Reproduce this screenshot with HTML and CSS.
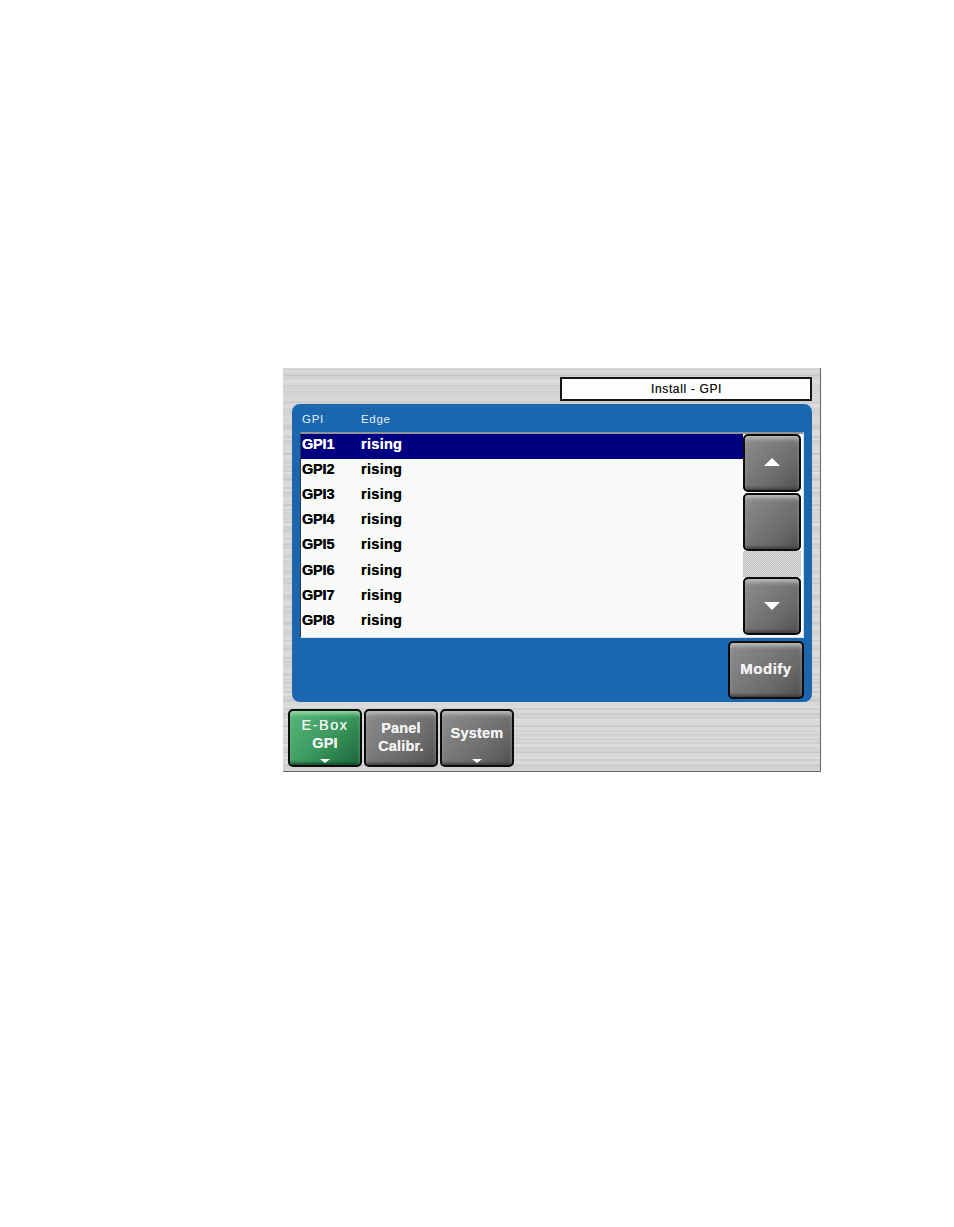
FILE: index.html
```html
<!DOCTYPE html>
<html lang="en">
<head>
<meta charset="utf-8">
<title>Install - GPI</title>
<link rel="stylesheet" href="styles.css">
</head>
<body>
<main class="screen">
  <header class="topbar"><div class="title">Install - GPI</div></header>
  <section class="panel">
    <div class="cols"><span class="col-a">GPI</span><span>Edge</span></div>
    <div class="listbox">
      <ul class="rows">
        <li class="row selected"><span class="col-a">GPI1</span><span class="val">rising</span></li>
        <li class="row"><span class="col-a">GPI2</span><span class="val">rising</span></li>
        <li class="row"><span class="col-a">GPI3</span><span class="val">rising</span></li>
        <li class="row"><span class="col-a">GPI4</span><span class="val">rising</span></li>
        <li class="row"><span class="col-a">GPI5</span><span class="val">rising</span></li>
        <li class="row"><span class="col-a">GPI6</span><span class="val">rising</span></li>
        <li class="row"><span class="col-a">GPI7</span><span class="val">rising</span></li>
        <li class="row"><span class="col-a">GPI8</span><span class="val">rising</span></li>
      </ul>
      <div class="scroll">
        <button class="btn sbtn up"><svg class="arrow" viewBox="0 0 16 8" width="16" height="8"><path d="M8 0 16 8H0Z"/></svg></button>
        <button class="btn sbtn thumb"></button>
        <div class="track"></div>
        <button class="btn sbtn"><svg class="arrow" viewBox="0 0 16 8" width="16" height="8"><path d="M0 0H16L8 8Z"/></svg></button>
      </div>
    </div>
    <div class="actions"><button class="btn modify">Modify</button></div>
  </section>
  <nav class="tabs">
    <button class="btn tab green"><span class="e">E-Box</span><span>GPI</span><svg class="caret" viewBox="0 0 10 4" width="10" height="4"><path d="M0 0H10L5 4Z"/></svg></button>
    <button class="btn tab"><span>Panel</span><span>Calibr.</span></button>
    <button class="btn tab lift"><span>System</span><svg class="caret" viewBox="0 0 10 4" width="10" height="4"><path d="M0 0H10L5 4Z"/></svg></button>
  </nav>
</main>
</body>
</html>
```
FILE: styles.css
```css
* { box-sizing: border-box; }
html, body { margin: 0; background: #fff; }
body { height: 1227px; padding: 368px 0 0 283px; font-family: "Liberation Sans", Arial, sans-serif; }
.screen {
  width: 538px; height: 404px;
  padding: 9px 0 0 9px;
  border-right: 1px solid #666; border-bottom: 1px solid #666;
  background-color: #d6d6d6;
  background-image:
    repeating-linear-gradient(180deg, rgba(255,255,255,.22) 0 1px, rgba(0,0,0,0) 1px 7px, rgba(0,0,0,.05) 7px 8px, rgba(0,0,0,0) 8px 13px),
    repeating-linear-gradient(180deg, rgba(0,0,0,.035) 0 2px, rgba(255,255,255,.1) 2px 5px, rgba(0,0,0,.02) 5px 11px, rgba(255,255,255,.06) 11px 17px);
}
.topbar { display: flex; justify-content: flex-end; height: 24px; padding-right: 8px; }
.title {
  width: 252px; height: 24px; background: #fdfdfd; border: 2px solid #151515;
  display: flex; align-items: center; justify-content: center;
  font-size: 12px; letter-spacing: .65px; color: #111; padding-left: 1px;
  text-shadow: 0 0 .6px rgba(0,0,0,.6);
}
.panel {
  margin-top: 3px; width: 520px; height: 298px; background: #1a67b0; border-radius: 8px;
  padding: 0 8px; display: flex; flex-direction: column;
}
.cols { height: 28px; display: flex; align-items: center; padding: 2px 0 0 2px; color: #e4eef8; font-size: 11.5px; letter-spacing: .7px; }
.col-a { width: 59px; display: block; }
.listbox {
  height: 206px; display: flex; background: #f9fbfa;
  border: 1px solid #d8dde2; border-top: 2px solid #8f959b; border-left: 1px solid #30363c;
  padding-right: 2px;
}
.rows { flex: 1; margin: 0; padding: 0; list-style: none; }
.row {
  height: 25.2px; display: flex; align-items: center; padding-bottom: 6px; padding-left: 1px;
  color: #060606; font-weight: bold; font-size: 14.5px; text-shadow: 0 0 .6px currentColor;
}
.row .col-a { letter-spacing: -.2px; }
.val { letter-spacing: .3px; }
.selected { background: #000080; color: #fff; }
.scroll { width: 58px; display: flex; flex-direction: column; align-items: stretch; }
.btn {
  display: flex; flex-direction: column; align-items: center; justify-content: center;
  margin: 0; padding: 0; color: #f2f2f2; font-family: inherit; font-weight: bold;
  border: 2px solid #0c0c0c; border-radius: 5px;
  background: linear-gradient(135deg, #8d8d8d 0%, #7c7c7c 35%, #696969 70%, #4f4f4f 100%);
  box-shadow: inset 0 4px 4px -1px #bcbcbc, inset 0 -3px 3px -1px #3f3f3f;
  text-shadow: 0 0 .6px currentColor;
}
.sbtn { height: 58px; width: 58px; }
.up { padding-bottom: 3px; }
.thumb { margin-top: 1px; }
.track {
  height: 26px;
  background-color: #c9c9c9;
  background-image: repeating-conic-gradient(#b8b8b8 0 25%, #e6e6e6 0 50%);
  background-size: 2px 2px;
}
.arrow path, .caret path { fill: #fff; }
.actions { display: flex; justify-content: flex-end; padding-top: 3px; }
.modify { width: 76px; height: 58px; font-size: 15px; letter-spacing: .5px; padding-bottom: 3px; }
.tabs { display: flex; gap: 2px; margin: 7px 0 0 -4px; }
.tab { width: 74px; height: 58px; font-size: 14.5px; line-height: 18px; position: relative; letter-spacing: .2px; padding-bottom: 2px; }
.green {
  background: linear-gradient(135deg, #57b87b 0%, #3c9a5e 50%, #1b6639 100%);
  box-shadow: inset 0 4px 4px -1px #93d8aa, inset 0 -3px 3px -1px #124a2a;
  padding-bottom: 9px;
}
.green .e { font-weight: normal; letter-spacing: 1.5px; }
.lift { padding-bottom: 11px; }
.caret { position: absolute; bottom: 2px; left: 50%; margin-left: -5px; }
```
